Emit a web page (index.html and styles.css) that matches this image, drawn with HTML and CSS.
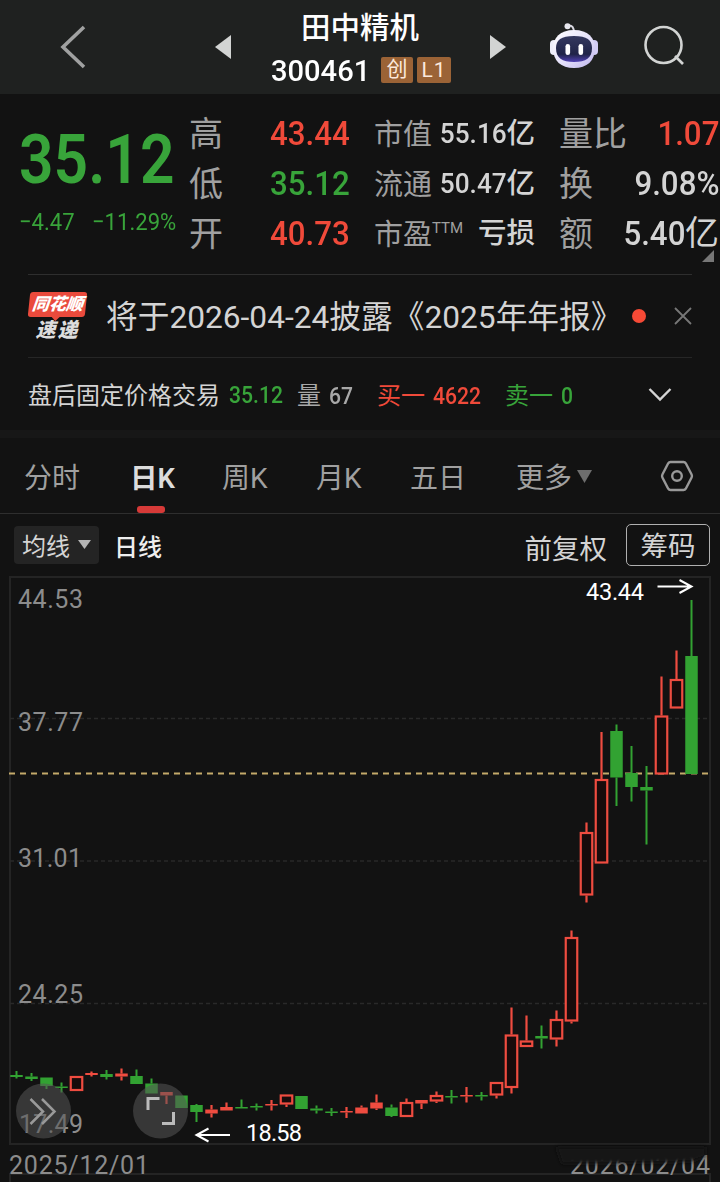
FILE: index.html
```
<!DOCTYPE html>
<html lang="zh-CN">
<head>
    <meta charset="UTF-8">
    <meta name="viewport" content="width=device-width, initial-scale=1.0">
    <title>田中精机 300461</title>
    <link rel="stylesheet" href="styles.css">
</head>
<body>
    <header class="header">
        <svg class="back" width="28" height="46" viewBox="0 0 28 46"><path d="M25 3L4 23L25 43" fill="none" stroke="#a0a1a1" stroke-width="3.6"/></svg>
        <svg class="prev" width="16" height="24" viewBox="0 0 16 24"><path d="M16 0V24L0 12Z" fill="#d2d4d3"/></svg>
        <div class="stock">
            <div class="stock-name">田中精机</div>
            <div class="stock-code">
                <span class="code">300461</span>
                <span class="tag">创</span>
                <span class="tag tag-l1">L1</span>
            </div>
        </div>
        <svg class="next" width="16" height="24" viewBox="0 0 16 24"><path d="M0 0V24L16 12Z" fill="#d2d4d3"/></svg>
        <svg class="robot" width="50" height="48" viewBox="0 0 50 48">
            <defs>
                <linearGradient id="shell" x1="0" y1="0" x2="1" y2="1">
                    <stop offset="0" stop-color="#ffffff"/>
                    <stop offset=".55" stop-color="#e4e0fa"/>
                    <stop offset="1" stop-color="#bdb4ec"/>
                </linearGradient>
                <linearGradient id="visor" x1="0" y1="0" x2="0" y2="1">
                    <stop offset="0" stop-color="#34385f"/>
                    <stop offset=".7" stop-color="#202448"/>
                    <stop offset="1" stop-color="#5040b4"/>
                </linearGradient>
            </defs>
            <path d="M19 2.500Q25 1.500 25 10" fill="none" stroke="#d9d9e2" stroke-width="2"/>
            <circle cx="18.500" cy="3.200" r="3" fill="#e7e7ee"/>
            <rect x="1" y="17" width="8" height="15" rx="4" fill="#eeeefa"/>
            <rect x="41" y="17" width="8" height="15" rx="4" fill="#d3cdf6"/>
            <path d="M25 7C39 7 46 15 46 25C46 38 38 45 25 45C12 45 4 38 4 25C4 15 11 7 25 7Z" fill="url(#shell)"/>
            <path d="M25 13C38 13 43 17 43 25C43 35 37 39 25 39C13 39 7 35 7 25C7 17 12 13 25 13Z" fill="url(#visor)"/>
            <rect x="16.500" y="21" width="4.600" height="11" rx="2.300" fill="#fff"/>
            <rect x="29.500" y="21" width="4.600" height="11" rx="2.300" fill="#fff"/>
        </svg>
        <svg class="search" width="44" height="44" viewBox="0 0 44 44"><circle cx="21.5" cy="20" r="18" fill="none" stroke="#d2d4d3" stroke-width="2.6"/><path d="M33 31L41 39" stroke="#d2d4d3" stroke-width="2.6"/></svg>
    </header>

    <section class="quote">
        <div class="price-box">
            <div class="price"><span class="num">35.12</span></div>
            <div class="change"><span class="num">−4.47</span><span class="num">−11.29%</span></div>
        </div>
        <dl class="stats stats-day">
            <div><dt>高</dt><dd class="up"><span class="num">43.44</span></dd></div>
            <div><dt>低</dt><dd class="down"><span class="num">35.12</span></dd></div>
            <div><dt>开</dt><dd class="up"><span class="num">40.73</span></dd></div>
        </dl>
        <dl class="stats stats-cap">
            <div><dt>市值</dt><dd><span class="num">55.16</span>亿</dd></div>
            <div><dt>流通</dt><dd><span class="num">50.47</span>亿</dd></div>
            <div><dt>市盈<sup>TTM</sup></dt><dd>亏损</dd></div>
        </dl>
        <dl class="stats stats-vol">
            <div><dt>量比</dt><dd class="up"><span class="num">1.07</span></dd></div>
            <div><dt>换</dt><dd><span class="num">9.08%</span></dd></div>
            <div><dt>额</dt><dd><span class="num">5.40</span>亿</dd></div>
        </dl>
        <span class="corner"></span>
    </section>

    <section class="news">
        <div class="logo">
            <div class="logo-top">同花顺</div>
            <div class="logo-bottom">速递</div>
        </div>
        <div class="news-text">将于2026-04-24披露《2025年年报》</div>
        <span class="dot"></span>
        <svg class="close" width="18" height="18" viewBox="0 0 18 18"><path d="M1 1L17 17M17 1L1 17" stroke="#777" stroke-width="1.8"/></svg>
    </section>

    <section class="after-hours">
        <span class="ah-title">盘后固定价格交易</span>
        <span class="ah-price down"><span class="num">35.12</span></span>
        <span class="ah-vol">量 <span class="num">67</span></span>
        <span class="ah-buy up">买一 <span class="num">4622</span></span>
        <span class="ah-sell down">卖一 <span class="num">0</span></span>
        <svg class="expand" width="24" height="16" viewBox="0 0 24 16"><path d="M1.5 2L12 12.5L22.5 2" fill="none" stroke="#d4d4d4" stroke-width="2.4"/></svg>
    </section>

    <nav class="tabs">
        <span class="tab">分时</span>
        <span class="tab active">日K</span>
        <span class="tab">周K</span>
        <span class="tab">月K</span>
        <span class="tab">五日</span>
        <span class="tab more">更多<svg width="15" height="13" viewBox="0 0 15 13"><path d="M0 0H15L7.5 13Z" fill="#6e6e6e"/></svg></span>
        <svg class="settings" width="34" height="32" viewBox="0 0 34 32"><path d="M10.5 2H23.5Q25 2 25.8 3.3L31.6 14.5Q32.4 16 31.6 17.5L25.8 28.7Q25 30 23.5 30H10.5Q9 30 8.2 28.7L2.4 17.5Q1.6 16 2.4 14.5L8.2 3.3Q9 2 10.5 2Z" fill="none" stroke="#999" stroke-width="2.4"/><circle cx="17" cy="16" r="4.8" fill="none" stroke="#999" stroke-width="2.4"/></svg>
    </nav>

    <div class="toolbar">
        <span class="ma-select">均线<svg width="13" height="9" viewBox="0 0 13 9"><path d="M0 0H13L6.5 9Z" fill="#b5b5b5"/></svg></span>
        <span class="period">日线</span>
        <span class="adjust">前复权</span>
        <span class="chips">筹码</span>
    </div>

    <svg class="chart" width="720" height="612" viewBox="0 570 720 612">
        <defs>
            <filter id="soft" x="-20%" y="-50%" width="140%" height="200%"><feGaussianBlur stdDeviation="2"/></filter>
        </defs>
        <rect class="frame" x="10" y="577" width="700" height="567"/>
        <path class="frame" d="M10 1182V1174H710V1182"/>
        <path class="grid" d="M10 718.5H710M10 861H710M10 1003.5H710"/>
        <path class="last-price" d="M9 773.5H711"/>
        <g class="axis">
            <text x="18" y="608" textLength="65">44.53</text>
            <text x="18" y="731" textLength="65">37.77</text>
            <text x="18" y="867" textLength="64">31.01</text>
            <text x="18" y="1003" textLength="65">24.25</text>
            <text x="19" y="1133" textLength="64">17.49</text>
            <text x="9" y="1174" textLength="140">2025/12/01</text>
            <text x="570" y="1174" textLength="140">2026/02/04</text>
        </g>
        <path d="M556 1147H706V1156L690 1162L640 1163L562 1164Z" fill="#181818" filter="url(#soft)"/>
        <g id="candles"></g>
        <g class="mark">
            <text x="586" y="600" textLength="58">43.44</text>
            <path d="M657.5 586.5H691M679.5 580L691.5 586.5L679.5 593"/>
            <text x="246" y="1141" textLength="56">18.58</text>
            <path d="M230 1135H197M208.5 1128.5L196.5 1135L208.5 1141.5"/>
        </g>
        <g class="float-btn">
            <circle cx="43.5" cy="1111" r="27.5"/>
            <path d="M30.5 1099L43 1111.5L30.5 1124M42 1099L54.5 1111.5L42 1124"/>
        </g>
        <g class="float-btn light">
            <circle cx="160.5" cy="1111" r="27.5"/>
            <path d="M148 1110V1098.5H159.5M162 1123.5H173.5V1112"/>
        </g>
    </svg>

    <script>
        // [type, high, bodyTop, bodyBottom, low]: u = up (hollow), d = down (filled)
        const candles = [
            ['d', 1071, 1075, 1077, 1078.5], ['d', 1073, 1076.5, 1079, 1081], ['d', 1077.5, 1077.5, 1086, 1089],
            ['d', 1082.5, 1086.5, 1088, 1092.5], ['u', 1076, 1076, 1091, 1091], ['u', 1071.5, 1073, 1075, 1076.5],
            ['d', 1070, 1074, 1077, 1079.5], ['u', 1068.5, 1073.5, 1076.5, 1080.5], ['d', 1069.5, 1076, 1084, 1084],
            ['d', 1078.5, 1083.5, 1093.5, 1093.5], ['u', 1092, 1092, 1095.5, 1104], ['d', 1095.5, 1095.5, 1108, 1108],
            ['d', 1104, 1105, 1112, 1122], ['u', 1105, 1109.5, 1113.5, 1117.5], ['u', 1102.5, 1107, 1110.5, 1110.5],
            ['d', 1099.5, 1107, 1108.5, 1108.5], ['d', 1103.5, 1106, 1107.5, 1110.5], ['u', 1100, 1104, 1105.5, 1110.5],
            ['u', 1094.5, 1094.5, 1104.5, 1107], ['d', 1096, 1096, 1109, 1109], ['d', 1105.5, 1108.5, 1110.5, 1113.5],
            ['d', 1108, 1111.5, 1113, 1116], ['u', 1107, 1111, 1112.5, 1118], ['u', 1105.5, 1107.5, 1113.5, 1113.5],
            ['u', 1094.5, 1102.5, 1108.5, 1110], ['d', 1104.5, 1107.5, 1116, 1117], ['u', 1098.5, 1102, 1117, 1117],
            ['u', 1100, 1100, 1103.5, 1109], ['u', 1091.5, 1095, 1101.5, 1103], ['d', 1090, 1096, 1097.5, 1103.5],
            ['u', 1087, 1095, 1096.5, 1102.5], ['d', 1092, 1095, 1096.5, 1100.5], ['u', 1082, 1082, 1095.5, 1098.5],
            ['u', 1007.5, 1034.5, 1088, 1093.5], ['u', 1015.5, 1040.5, 1047, 1047], ['d', 1025.5, 1036, 1038.5, 1048.5],
            ['u', 1010.5, 1019, 1039.5, 1046.5], ['u', 930.5, 937, 1021.5, 1023.5], ['u', 822.5, 832, 895.5, 902.5],
            ['u', 732, 779, 863.5, 863.5], ['d', 724.5, 731, 777.5, 806], ['d', 746, 773, 787, 801.5],
            ['d', 766, 787, 790.5, 844.5], ['u', 676.5, 715.5, 774.5, 774.5], ['u', 650.5, 679, 708.5, 708.5],
            ['d', 600, 656, 774, 774]
        ];

        let html = '';
        candles.forEach(([type, high, top, bottom, low], i) => {
            const x = 16.5 + i * 15;
            html += `<g class="${type === 'u' ? 'candle-up' : 'candle-down'}">`;
            html += `<path d="M${x} ${high}V${top}M${x} ${bottom}V${low}"/>`;
            if (type === 'u' && bottom - top > 6) {
                html += `<rect class="hollow" x="${x - 5.75}" y="${top + 1}" width="11.5" height="${bottom - top - 2}"/>`;
            } else {
                html += `<rect class="solid" x="${x - 6.25}" y="${top}" width="12.5" height="${bottom - top}"/>`;
            }
            html += '</g>';
        });
        document.getElementById('candles').innerHTML = html;
    </script>
</body>
</html>
```
FILE: styles.css
```
* {
    box-sizing: border-box;
}

body {
    margin: 0;
    width: 720px;
    height: 1182px;
    overflow: hidden;
    background-color: #121212;
    color: #d4d4d4;
    font-family: Roboto, "Noto Sans CJK SC", sans-serif;
    white-space: nowrap;
}

svg {
    display: block;
    flex-shrink: 0;
}

.up {
    color: #f04a3a;
}

.down {
    color: #38a43a;
}

/* narrow figures */
.num {
    display: inline-block;
    font-weight: 500;
    transform: scaleX(0.92);
    transform-origin: right center;
}

.header {
    display: flex;
    align-items: center;
    height: 94px;
    padding-left: 59px;
    background-color: #1f2120;
}

.prev {
    margin-left: 128px;
}

.stock {
    width: 258px;
    padding-top: 4px;
}

.stock-name {
    height: 48px;
    line-height: 50px;
    font-size: 29.5px;
    font-weight: 500;
    color: #fff;
    text-align: center;
}

.stock-code {
    display: flex;
    align-items: center;
    height: 44px;
    padding: 0 0 6px 40px;
}

.code {
    width: 103px;
    margin-right: 7px;
    font-size: 30px;
    font-weight: 500;
    color: #fff;
    transform: scaleX(0.97);
    transform-origin: left center;
}

.tag {
    width: 32px;
    height: 26px;
    margin-right: 4px;
    border-radius: 2px;
    background-color: #9b6336;
    color: #fbe9dc;
    font-size: 21px;
    line-height: 25px;
    text-align: center;
}

.tag-l1 {
    width: 34px;
    margin-right: 0;
    line-height: 27px;
    letter-spacing: 1px;
}

.next {
    margin-left: 1px;
}

.robot {
    margin-left: 43px;
}

.search {
    margin-left: 43px;
}

.quote {
    position: relative;
    display: flex;
    height: 180px;
    padding-top: 14px;
}

.price-box {
    width: 189px;
    padding-left: 19px;
    color: #38a43a;
}

.price {
    height: 92px;
    line-height: 104px;
    font-size: 68px;
}

.price .num {
    font-weight: 600;
    transform: scaleX(0.89);
    transform-origin: left center;
}

.change {
    display: flex;
    gap: 12px;
    line-height: 44px;
    font-size: 24px;
}

.change .num {
    font-weight: 400;
    transform-origin: left center;
}

.stats {
    margin: 0;
    line-height: 50px;
}

.stats div {
    display: flex;
    justify-content: space-between;
    height: 50px;
}

.stats dt {
    padding-top: 1px;
    color: #a0a0a0;
}

.stats dd {
    margin: 0;
}

.stats-day {
    width: 161px;
    font-size: 34px;
}

.stats-cap {
    width: 161px;
    margin-left: 24px;
    padding-top: 1px;
    font-size: 29px;
}

.stats-cap dd {
    font-size: 28.5px;
    font-weight: 500;
}

.stats-cap sup {
    font-size: 15px;
    line-height: 0;
    vertical-align: 12px;
}

.stats-vol {
    width: 160px;
    margin-left: 24px;
    font-size: 34px;
}

.corner {
    position: absolute;
    right: 6px;
    bottom: 12px;
    border-left: 12px solid transparent;
    border-bottom: 12px solid #777;
}

.news {
    display: flex;
    align-items: center;
    height: 84px;
    margin: 0 28px;
    border-top: 1px solid #2e2e2e;
    border-bottom: 1px solid #262626;
}

.logo {
    width: 59px;
    margin-right: 19px;
    font-style: italic;
    font-weight: 900;
    text-align: center;
}

.logo-top {
    position: relative;
    width: 57px;
    height: 25px;
    margin-left: 1px;
    border-radius: 3px;
    background-color: #ea4a3c;
    color: #fff;
    font-size: 17px;
    line-height: 24px;
    transform: skewX(-6deg);
}

.logo-top::after {
    content: "";
    position: absolute;
    left: 24px;
    top: 25px;
    border: 4px solid transparent;
    border-top-color: #ea4a3c;
    border-bottom: 0;
}

.logo-bottom {
    height: 24px;
    color: #ddd;
    font-size: 20px;
    line-height: 26px;
    letter-spacing: 2px;
}

.news-text {
    width: 519px;
    padding-bottom: 4px;
    font-size: 31.7px;
}

.dot {
    width: 14px;
    height: 14px;
    margin: 0 28px 0 7px;
    border-radius: 50%;
    background-color: #f64a36;
}

.after-hours {
    display: flex;
    align-items: center;
    height: 72px;
    padding: 0 0 2px 28px;
    font-size: 24px;
}

.after-hours .num {
    margin-left: 2px;
    transform: scaleX(0.88);
    transform-origin: left center;
}

.ah-title {
    width: 199px;
}

.ah-price {
    width: 70px;
    padding-top: 4px;
}

.ah-vol {
    width: 80px;
    color: #a8a8a8;
}

.ah-buy {
    width: 128px;
}

.ah-sell {
    width: 143px;
}

.expand {
    margin-top: 4px;
}

.tabs {
    display: flex;
    align-items: center;
    height: 84px;
    padding: 1px 0 0 24px;
    border-top: 8px solid #171717;
    border-bottom: 1px solid #2e2e2e;
    font-size: 28px;
    color: #a0a0a0;
}

.tab {
    position: relative;
    width: 94px;
}

.tab:first-child {
    width: 106px;
}

.tab.active {
    width: 92px;
    color: #dcdcdc;
    font-size: 27.5px;
    font-weight: 600;
}

.tab.active::after {
    content: "";
    position: absolute;
    left: 7px;
    bottom: -17px;
    width: 28px;
    height: 7px;
    border-radius: 3px;
    background-color: #d63a38;
}

.tab:nth-child(5) {
    width: 106px;
}

.tab.more {
    display: flex;
    align-items: center;
    gap: 5px;
    width: 144px;
}

.settings {
    margin-bottom: 1px;
}

.toolbar {
    display: flex;
    align-items: center;
    height: 56px;
    padding: 6px 10px 0 14px;
    font-size: 24px;
}

.ma-select {
    display: flex;
    align-items: center;
    justify-content: center;
    gap: 8px;
    width: 85px;
    height: 38px;
    margin-right: 15px;
    padding-bottom: 2px;
    border-radius: 4px;
    background-color: #242424;
}

.period {
    color: #eee;
    font-weight: 500;
}

.adjust {
    margin-left: auto;
    padding-top: 3px;
    font-size: 27.5px;
}

.chips {
    width: 84px;
    height: 42px;
    margin-left: 19px;
    border: 1px solid #b0b0b0;
    border-radius: 5px;
    font-size: 27.5px;
    line-height: 44px;
    text-align: center;
}

.frame {
    fill: none;
    stroke: #242424;
    stroke-width: 2;
}

.grid {
    stroke: #292929;
    stroke-width: 1.5;
    stroke-dasharray: 4 3;
}

.last-price {
    stroke: #c4aa6a;
    stroke-width: 2;
    stroke-dasharray: 6 5;
}

.axis {
    fill: #8c8c8c;
    font-size: 25px;
}

.mark text {
    fill: #fff;
    font-size: 23.5px;
}

.mark path {
    fill: none;
    stroke: #fff;
    stroke-width: 2;
}

.candle-up path,
.candle-up .hollow {
    fill: #180b0b;
    stroke: #ef4c40;
    stroke-width: 2.2;
}

.candle-up .solid {
    fill: #ef4c40;
}

.candle-down path {
    stroke: #32a232;
    stroke-width: 2;
}

.candle-down .solid {
    fill: #32a232;
}

.float-btn circle {
    fill: #555;
    fill-opacity: 0.55;
}

.float-btn path {
    fill: none;
    stroke: #999;
    stroke-width: 2.5;
}

.float-btn.light path {
    stroke: #bbb;
    stroke-width: 3;
}
```
